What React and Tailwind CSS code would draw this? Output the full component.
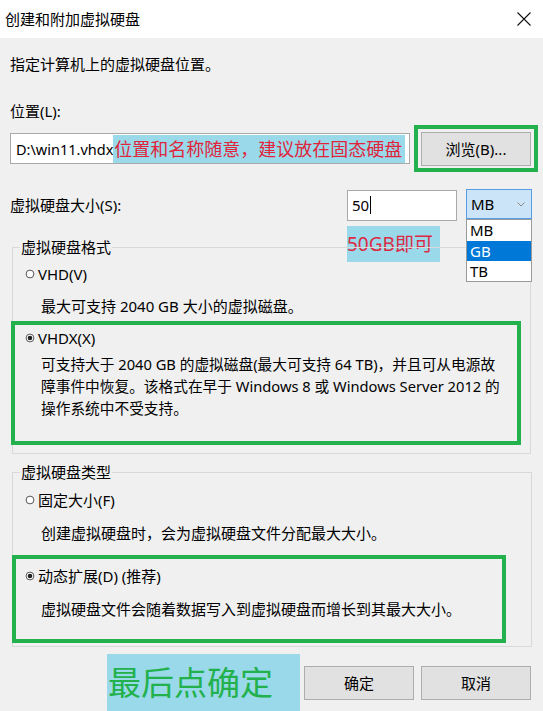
import React from "react";

function Radio({ checked }) {
  return (
    <svg width="10" height="10" viewBox="0 0 10 10" className="shrink-0">
      <circle cx="5" cy="5" r="3.9" fill="#ffffff" stroke="#444444" strokeWidth="0.9" />
      {checked && <circle cx="5" cy="5" r="2.3" fill="#222222" />}
    </svg>
  );
}

export default function App() {
  return (
    <div className="w-[543px] h-[711px] overflow-hidden bg-[#f0f0f0] text-black font-['Noto_Sans','Noto_Sans_CJK_SC',sans-serif] text-[15px] leading-[20px]">
      {/* Title bar */}
      <div className="h-[38px] bg-white flex items-center justify-between pl-[5px] pr-[12px]">
        <span className="text-[15px]">创建和附加虚拟硬盘</span>
        <svg width="14" height="14" viewBox="0 0 14 14">
          <path d="M0.5 0.5 L13.5 13.5 M13.5 0.5 L0.5 13.5" stroke="#111" strokeWidth="1.1" fill="none" />
        </svg>
      </div>

      <div className="pl-[10px] relative">
        <div className="mt-[16px]">指定计算机上的虚拟硬盘位置。</div>
        <div className="mt-[27px]">位置(L):</div>

        {/* Location row */}
        <div className="mt-[4px] flex items-center">
          <div className="w-[400px] h-[31px] bg-white border border-[#a9a9a9] flex items-center pl-[5px] whitespace-nowrap overflow-hidden">
            <span className="text-[14.5px]">D:\win11.vhdx</span>
            <span className="bg-[#99d9ea] text-[#e0243c] text-[18px] leading-[28px] h-[28px] w-[292px] pl-[1px]">
              位置和名称随意，建议放在固态硬盘
            </span>
          </div>
          <div className="ml-[4px] w-[124px] h-[47px] border-[4px] border-[#22b14c] flex items-center justify-center">
            <div className="w-[110px] h-[34px] bg-[#e1e1e1] border border-[#adadad] flex items-center justify-center">
              浏览(B)...
            </div>
          </div>
        </div>

        {/* Size row */}
        <div className="mt-[17px] flex items-center h-[32px]">
          <div className="flex-1">虚拟硬盘大小(S):</div>
          <div className="relative w-[110px] h-[31px] bg-white border border-[#a9a9a9] flex items-center pl-[4px] text-[15px]">
            <span>50</span>
            <span className="ml-[1px] w-[1px] h-[18px] bg-black"></span>
            <div className="absolute left-[-1px] top-[35px] w-[93px] h-[36px] bg-[#99d9ea] text-[#dc2a44] text-[19px] leading-[36px] whitespace-nowrap">
              50GB即可
            </div>
          </div>
          <div className="relative ml-[9px] mr-[11px] w-[66px] h-[30px] self-start bg-[#cce4f7] border border-[#569de5] flex items-center justify-between pl-[4px] pr-[6px] text-[15px]">
            <span>MB</span>
            <svg width="8" height="5" viewBox="0 0 8 5">
              <path d="M0.5 0.5 L4 4 L7.5 0.5" stroke="#888" strokeWidth="1" fill="none" />
            </svg>
            <div className="absolute left-[-1px] top-[29px] w-[66px] bg-white border border-[#9a9a9a] z-10 text-[15px] leading-[20px]">
              <div className="pl-[3px] h-[21px]">MB</div>
              <div className="pl-[3px] h-[20px] bg-[#0078d7] text-white">GB</div>
              <div className="pl-[3px] h-[20px]">TB</div>
            </div>
          </div>
        </div>

        {/* Group 1 */}
        <div className="relative mt-[26px] ml-[2px] w-[519px] h-[207px] border border-[#d9d9d9] pt-[16px]">
          <div className="absolute left-[7px] top-[-11px] bg-[#f0f0f0] px-[1px]">虚拟硬盘格式</div>
          <div className="flex items-center pl-[12px] h-[20px]">
            <Radio />
            <span className="ml-[3px]">VHD(V)</span>
          </div>
          <div className="mt-[12px] pl-[28px]">最大可支持 2040 GB 大小的虚拟磁盘。</div>
          <div className="mt-[5px] ml-[-2px] w-[510px] h-[124px] border-[4px] border-[#22b14c] pt-[3px]">
            <div className="flex items-center pl-[10px] h-[20px]">
              <Radio checked />
              <span className="ml-[3px]">VHDX(X)</span>
            </div>
            <div className="mt-[5px] pl-[26px] leading-[22px] text-[14.7px] whitespace-nowrap">
              可支持大于 2040 GB 的虚拟磁盘(最大可支持 64 TB)，并且可从电源故
              <br />
              障事件中恢复。该格式在早于 Windows 8 或 Windows Server 2012 的
              <br />
              操作系统中不受支持。
            </div>
          </div>
        </div>

        {/* Group 2 */}
        <div className="relative mt-[18px] ml-[2px] w-[520px] h-[175px] border border-[#d9d9d9] pt-[17px]">
          <div className="absolute left-[7px] top-[-11px] bg-[#f0f0f0] px-[1px]">虚拟硬盘类型</div>
          <div className="flex items-center pl-[12px] h-[20px]">
            <Radio />
            <span className="ml-[3px]">固定大小(F)</span>
          </div>
          <div className="mt-[13px] pl-[28px]">创建虚拟硬盘时，会为虚拟硬盘文件分配最大大小。</div>
          <div className="mt-[12px] ml-[-1px] w-[494px] h-[88px] border-[4px] border-[#22b14c] pt-[7px]">
            <div className="flex items-center pl-[9px] h-[20px]">
              <Radio checked />
              <span className="ml-[3px]">动态扩展(D) (推荐)</span>
            </div>
            <div className="mt-[13px] pl-[25px]">虚拟硬盘文件会随着数据写入到虚拟硬盘而增长到其最大大小。</div>
          </div>
        </div>

        {/* Bottom row */}
        <div className="mt-[7px] flex items-start pl-[97px]">
          <div className="w-[193px] h-[58px] bg-[#99d9ea] text-[#22b14c] text-[33px] leading-[58px] pl-[1px] whitespace-nowrap">
            最后点确定
          </div>
          <div className="ml-[4px] mt-[12px] w-[110px] h-[34px] bg-[#e1e1e1] border border-[#adadad] flex items-center justify-center">
            确定
          </div>
          <div className="ml-[7px] mt-[12px] w-[110px] h-[34px] bg-[#e1e1e1] border border-[#adadad] flex items-center justify-center">
            取消
          </div>
        </div>
      </div>
    </div>
  );
}
